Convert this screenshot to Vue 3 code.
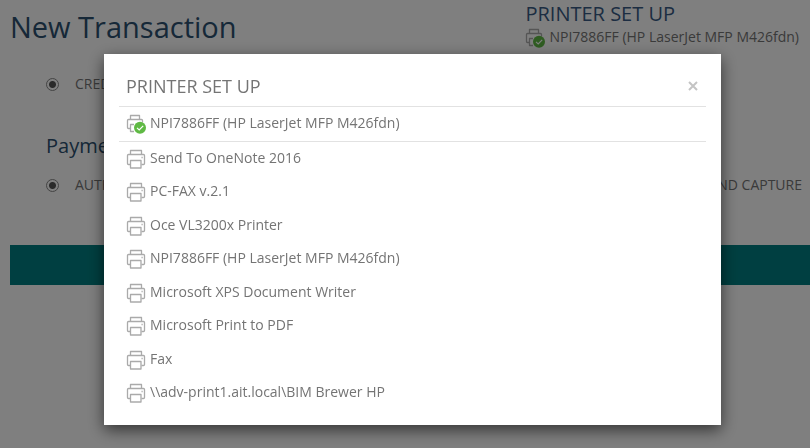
<script setup>
import { ref } from 'vue'

const printers = [
  'Send To OneNote 2016',
  'PC-FAX v.2.1',
  'Oce VL3200x Printer',
  'NPI7886FF (HP LaserJet MFP M426fdn)',
  'Microsoft XPS Document Writer',
  'Microsoft Print to PDF',
  'Fax',
  '\\\\adv-print1.ait.local\\BIM Brewer HP',
]
const selected = ref('NPI7886FF (HP LaserJet MFP M426fdn)')
const open = ref(true)
const method = ref('credit')
const action = ref('authorize')
</script>

<template>
  <svg class="defs" aria-hidden="true">
    <symbol id="printer" viewBox="0 0 20 20">
      <g fill="none" stroke="#aaa" stroke-width="1.3" stroke-linejoin="round">
        <path d="M4.5 5.5V1.5h11v4" />
        <path d="M4.5 15.5h-2q-1 0-1-1v-8q0-1 1-1h15q1 0 1 1v8q0 1-1 1h-2" />
        <path d="M5.5 11.5h9.5v7.5H4.5v-7.5z" />
        <path d="M15.5 8.5h1.2" />
      </g>
    </symbol>
    <symbol id="printer-ready" viewBox="0 0 20 20">
      <g fill="none" stroke="#aaa" stroke-width="1.3" stroke-linejoin="round">
        <path d="M4.5 5.5V1.5h9v4" />
        <path d="M4.5 14.5h-2q-1 0-1-1v-7q0-1 1-1h13q1 0 1 1v2" />
        <path d="M8 10.5H4.5v7H8" />
      </g>
      <circle cx="14" cy="13.8" r="6" fill="#5fb944" />
      <path d="M11 13.9l2.2 2.1 4-4.1" fill="none" stroke="#fff" stroke-width="1.2" />
    </symbol>
  </svg>

  <main class="page">
    <header class="top">
      <h1>New Transaction</h1>
      <div class="current">
        <a href="#printers" class="setup" @click.prevent="open = true">PRINTER SET UP</a>
        <p class="device">
          <svg class="icon"><use href="#printer-ready" /></svg>
          <span>{{ selected }}</span>
        </p>
      </div>
    </header>

    <div class="choices method">
      <label><input v-model="method" type="radio" name="method" value="credit" />CREDIT</label>
    </div>
    <h2>Payment</h2>
    <div class="choices">
      <label><input v-model="action" type="radio" name="action" value="authorize" />AUTHORIZE</label>
      <label><input v-model="action" type="radio" name="action" value="capture" />AUTHORIZE AND CAPTURE</label>
    </div>
    <div class="band"></div>
  </main>

  <div v-if="open" class="backdrop">
    <section class="modal" role="dialog" aria-modal="true" aria-labelledby="dialog-title">
      <header class="modal-head">
        <h3 id="dialog-title">PRINTER SET UP</h3>
        <button type="button" class="close" aria-label="Close" @click="open = false">
          <svg viewBox="0 0 10 10"><path d="M1 1l8 8M9 1l-8 8" stroke="#c4c4c4" stroke-width="2" /></svg>
        </button>
      </header>
      <div class="row chosen">
        <svg class="icon"><use href="#printer-ready" /></svg>
        <span>{{ selected }}</span>
      </div>
      <div class="list">
        <button v-for="name in printers" :key="name" type="button" class="row" @click="selected = name">
          <svg class="icon"><use href="#printer" /></svg>
          <span>{{ name }}</span>
        </button>
      </div>
    </section>
  </div>
</template>

<style>
body {
  margin: 0;
  background: #fff;
}
</style>

<style scoped>
* {
  box-sizing: border-box;
}
.defs {
  position: absolute;
  width: 0;
  height: 0;
}
.page,
.backdrop {
  font-family: "Open Sans", "Noto Sans", sans-serif;
  font-size: 14px;
  line-height: 20px;
  color: #747474;
}
.page {
  min-height: 100vh;
  padding-left: 10px;
  overflow: hidden;
}
h1,
h2,
h3,
p {
  margin: 0;
  font-weight: 400;
}
.top {
  display: flex;
  justify-content: space-between;
  height: 74px;
  padding-right: 11px;
}
h1 {
  padding-top: 7px;
  font-size: 29px;
  line-height: 40px;
  color: #2c5070;
}
.current {
  padding-top: 2px;
}
.setup {
  display: block;
  font-size: 20px;
  line-height: 24px;
  color: #385a84;
  text-decoration: none;
}
.device {
  display: flex;
  align-items: center;
  gap: 4px;
  height: 24px;
}
.icon {
  flex: none;
  width: 20px;
  height: 20px;
}
.icon + span {
  padding-bottom: 2px;
}
.choices {
  display: flex;
  justify-content: space-between;
  padding: 0 8px 0 36px;
}
.method {
  margin-bottom: 38px;
}
label {
  display: flex;
  align-items: center;
  gap: 16px;
}
input {
  appearance: none;
  width: 13px;
  height: 13px;
  margin: 0;
  border: 1px solid #888;
  border-radius: 50%;
}
input:checked {
  background: radial-gradient(circle, #555 0 3px, transparent 4px);
}
h2 {
  padding-left: 36px;
  margin-bottom: 15px;
  font-size: 20px;
  line-height: 28px;
  color: #2c5070;
}
.band {
  height: 40px;
  margin-top: 50px;
  background: #007f82;
}
.backdrop {
  position: fixed;
  inset: 0;
  padding: 54px 89px 23px 104px;
  background: rgba(0, 0, 0, 0.5);
}
.modal {
  padding: 0 15px 15px;
  background: #fff;
  box-shadow: 0 5px 15px rgba(0, 0, 0, 0.6);
}
.modal-head {
  display: flex;
  align-items: center;
  justify-content: space-between;
  height: 53px;
  padding: 12px 8px 0 7px;
  border-bottom: 1px solid #e2e2e2;
}
h3 {
  font-size: 18px;
  line-height: 24px;
}
.close {
  display: flex;
  padding: 0;
  border: 0;
  background: none;
}
.close svg {
  width: 10px;
  height: 10px;
}
.row {
  display: flex;
  align-items: center;
  gap: 4px;
  width: 100%;
  padding: 0 7px;
  border: 0;
  background: none;
  font: inherit;
  color: inherit;
  text-align: left;
}
.chosen {
  height: 35px;
  border-bottom: 1px solid #e2e2e2;
}
.list {
  display: grid;
  min-height: 268px;
}
</style>
